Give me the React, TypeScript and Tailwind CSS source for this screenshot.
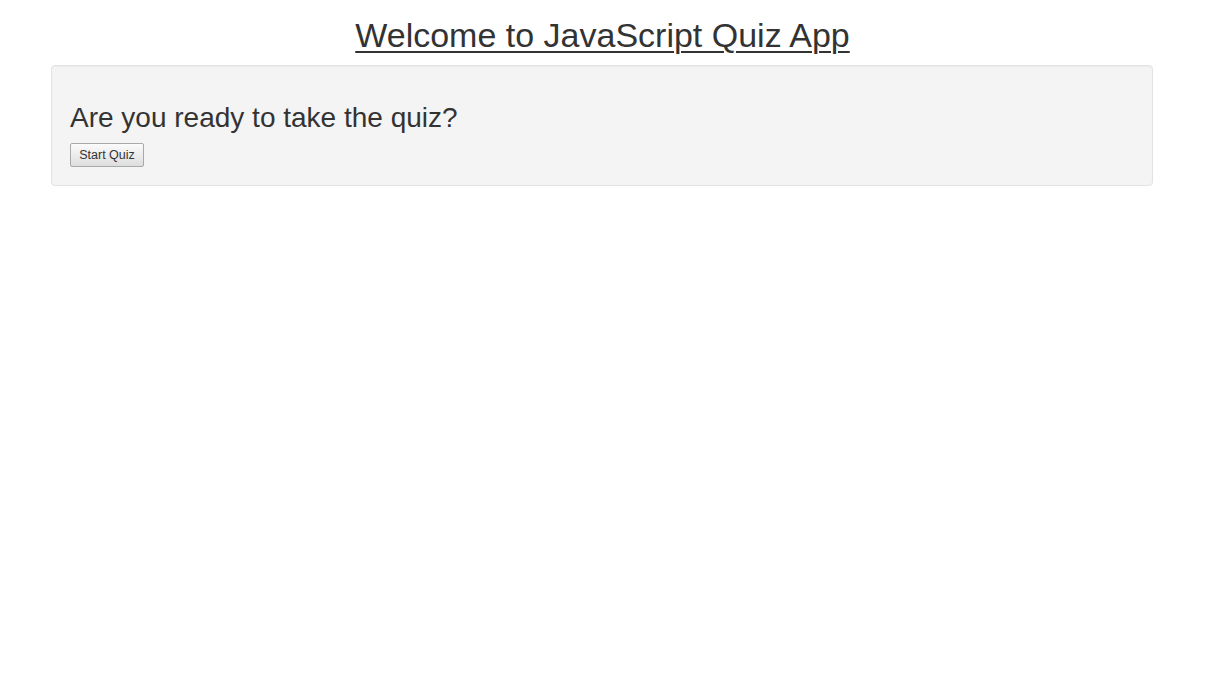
import React from "react";

export default function App() {
  return (
    <div className="min-h-[678px] w-full bg-white text-[#333] font-['Liberation_Sans',Arial,sans-serif]">
      <h1 className="pt-[17px] text-center text-[34px] leading-[37px] font-normal underline decoration-[2px] underline-offset-[4px]">
        Welcome to JavaScript Quiz App
      </h1>
      <div className="ml-[51px] mt-[11px] w-[1102px] rounded-[4px] border border-[#e3e3e3] bg-[#f4f4f4] pl-[18px] pr-[18px] pt-[36px] pb-[18px] shadow-[inset_0_1px_1px_rgba(0,0,0,0.04)]">
        <h2 className="text-[28px] leading-[31px] font-normal text-[#333]">
          Are you ready to take the quiz?
        </h2>
        <button
          type="button"
          className="mt-[10px] flex h-[24px] w-[74px] items-center justify-center rounded-[2px] border border-[#a9a9a9] bg-gradient-to-b from-[#fbfbfb] to-[#dedede] text-[12.5px] leading-none text-[#333]"
        >
          Start Quiz
        </button>
      </div>
    </div>
  );
}
